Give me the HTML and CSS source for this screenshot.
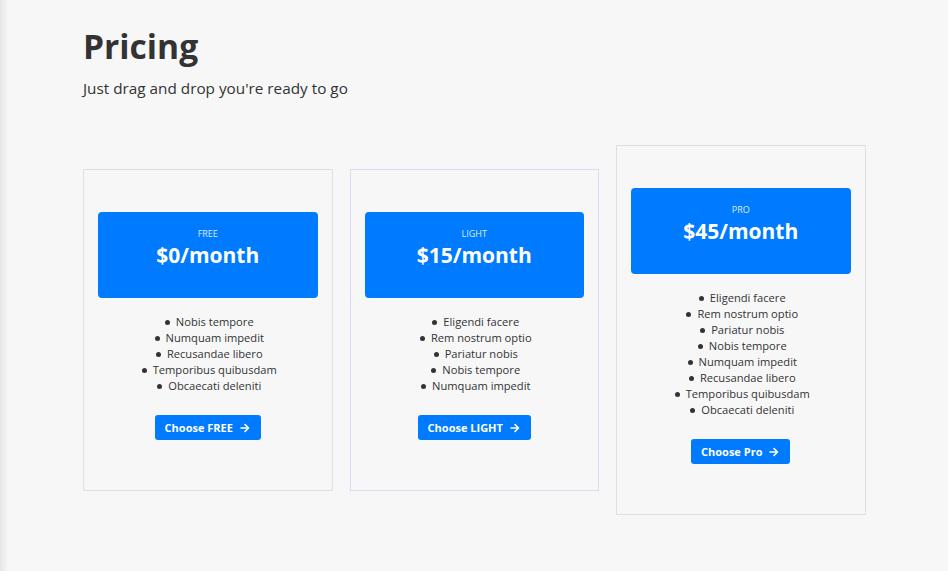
FILE: index.html
```html
<!DOCTYPE html>
<html>
<head>
<meta charset="utf-8">
<link rel="stylesheet" href="styles.css">
</head>
<body>
<div class="edge"></div>
<main class="page">
  <h1 class="title">Pricing</h1>
  <p class="subtitle">Just drag and drop you're ready to go</p>
  <section class="cards">
    <div class="card">
      <div class="head"><div class="plan">FREE</div><div class="price">$0/month</div></div>
      <ul class="features">
        <li>Nobis tempore</li>
        <li>Numquam impedit</li>
        <li>Recusandae libero</li>
        <li>Temporibus quibusdam</li>
        <li>Obcaecati deleniti</li>
      </ul>
      <a class="btn">Choose FREE <svg class="arrow" viewBox="0 0 10 10"><path d="M1 5h7.5M5 1.5L8.5 5L5 8.5" fill="none" stroke="#fff" stroke-width="1.6" stroke-linecap="round" stroke-linejoin="round"/></svg></a>
    </div>
    <div class="card card-light">
      <div class="head"><div class="plan">LIGHT</div><div class="price">$15/month</div></div>
      <ul class="features">
        <li>Eligendi facere</li>
        <li>Rem nostrum optio</li>
        <li>Pariatur nobis</li>
        <li>Nobis tempore</li>
        <li>Numquam impedit</li>
      </ul>
      <a class="btn">Choose LIGHT <svg class="arrow" viewBox="0 0 10 10"><path d="M1 5h7.5M5 1.5L8.5 5L5 8.5" fill="none" stroke="#fff" stroke-width="1.6" stroke-linecap="round" stroke-linejoin="round"/></svg></a>
    </div>
    <div class="card">
      <div class="head"><div class="plan">PRO</div><div class="price">$45/month</div></div>
      <ul class="features">
        <li>Eligendi facere</li>
        <li>Rem nostrum optio</li>
        <li>Pariatur nobis</li>
        <li>Nobis tempore</li>
        <li>Numquam impedit</li>
        <li>Recusandae libero</li>
        <li>Temporibus quibusdam</li>
        <li>Obcaecati deleniti</li>
      </ul>
      <a class="btn">Choose Pro <svg class="arrow" viewBox="0 0 10 10"><path d="M1 5h7.5M5 1.5L8.5 5L5 8.5" fill="none" stroke="#fff" stroke-width="1.6" stroke-linecap="round" stroke-linejoin="round"/></svg></a>
    </div>
  </section>
</main>
</body>
</html>
```

FILE: styles.css
```css
html, body {
  margin: 0;
  padding: 0;
  background: #f7f7f8;
  font-family: "Open Sans", "Noto Sans", sans-serif;
  color: #333;
}
.edge {
  position: fixed;
  left: 0;
  top: 0;
  bottom: 0;
  width: 8px;
  background: linear-gradient(to right, #e4e4e4, rgba(247,247,248,0));
}
.page {
  padding: 24px 0 0 83px;
}
.title {
  margin: 0;
  font-size: 33.6px;
  font-weight: 700;
  line-height: 44px;
  color: #333;
}
.subtitle {
  margin: 9px 0 0;
  font-size: 15.3px;
  line-height: 22px;
  color: #333;
}
.cards {
  display: flex;
  align-items: center;
  gap: 17px;
  margin-top: 46px;
}
.card {
  box-sizing: border-box;
  width: 249.5px;
  border: 1px solid #e0e0e0;
  padding: 42px 14px 50px;
  display: flex;
  flex-direction: column;
  align-items: center;
}
.card-light {
  border-color: #dadaf0;
}
.head {
  align-self: stretch;
  height: 86px;
  box-sizing: border-box;
  background: #007bff;
  border-radius: 4px;
  color: #fff;
  text-align: center;
  padding-top: 16px;
}
.plan {
  font-size: 9px;
  line-height: 12px;
  color: #dcecff;
}
.price {
  font-size: 21px;
  font-weight: 700;
  line-height: 30px;
}
.features {
  list-style: none;
  margin: 16px 0 0;
  padding: 0 0 0 3px;
  text-align: center;
  font-size: 11.15px;
  line-height: 16px;
  color: #333;
}
.features li::before {
  content: "";
  display: inline-block;
  width: 5px;
  height: 5px;
  border-radius: 50%;
  background: #333;
  margin-right: 6px;
  vertical-align: 1px;
}
.btn {
  margin-top: 21px;
  height: 25px;
  box-sizing: border-box;
  padding: 0 11px 0 10px;
  background: #007bff;
  border-radius: 3px;
  color: #fff;
  font-size: 11px;
  font-weight: 700;
  display: flex;
  align-items: center;
  gap: 7px;
}
.arrow {
  width: 10px;
  height: 10px;
}
```
